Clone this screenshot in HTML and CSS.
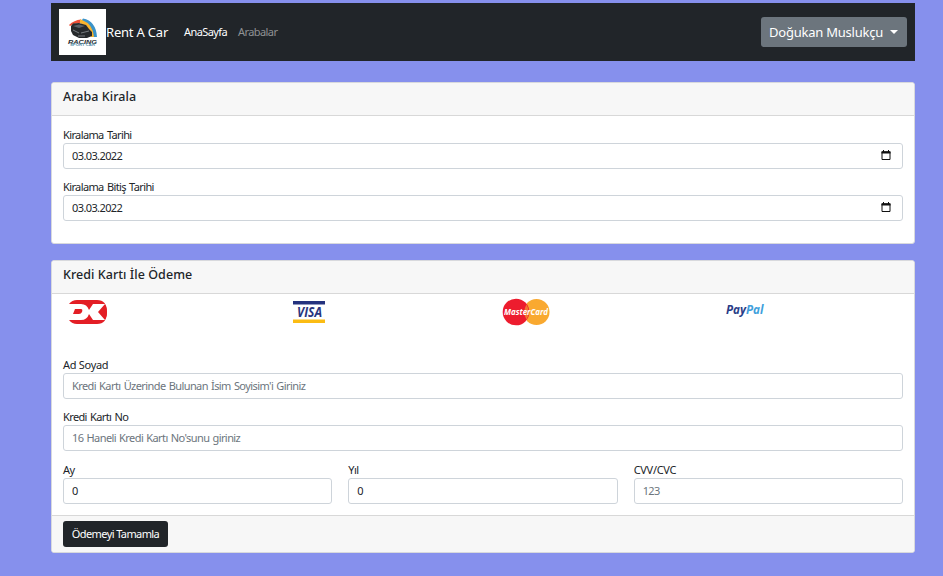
FILE: index.html
```html
<!DOCTYPE html>
<html lang="tr">
<head>
<meta charset="utf-8">
<title>Rent A Car</title>
<link rel="stylesheet" href="styles.css">
</head>
<body>
<div class="container">
  <nav class="navbar">
    <svg class="logo" viewBox="0 0 47 46">
      <rect width="47" height="46" fill="#fff"/>
      <path d="M10 16Q15 11 22 10.500L23 14Q16 13.500 11 17Z" fill="#ee5038"/>
      <path d="M21 10.500Q30 11 34 19L36 28H32Q30 18 21 14Z" fill="#fbb42d"/>
      <path d="M24 9.500Q37 12 38 28H35Q34 15 23 11Z" fill="#3b93c9"/>
      <path d="M12 17L14 14.500L20 14L27 16L30 20L33 23V27L28 29H20L14 26L12 22Z" fill="#26292c"/>
      <path d="M14 17L20 15.500L26 17L20 19Z" fill="#596066"/>
      <path d="M14 21L20 24M22 24L30 22M19 27L26 27" stroke="#8b9195" stroke-width=".8" fill="none"/>
      <text x="9" y="34.500" class="logo-title" textLength="29" lengthAdjust="spacingAndGlyphs">RACING</text>
      <text x="11" y="37.200" class="logo-sub" textLength="25" lengthAdjust="spacingAndGlyphs">SPORT CAR</text>
    </svg>
    <span class="brand">Rent A Car</span>
    <a class="link active">AnaSayfa</a>
    <a class="link">Arabalar</a>
    <button class="user"><span>Doğukan Muslukçu</span><i class="caret"></i></button>
  </nav>

  <section class="card rental">
    <h5 class="card-header">Araba Kirala</h5>
    <div class="card-body">
      <label class="field"><span class="label">Kiralama Tarihi</span>
        <span class="control"><span class="date">03.03.2022</span>
          <svg class="calendar" viewBox="0 0 10 11"><path d="M1 2H9V9.500H1Z" fill="none" stroke="#111"/><path d="M.5 1.200H9.500V3.500H.5ZM2 0H3V2H2ZM7 0H8V2H7Z" fill="#111"/></svg></span></label>
      <label class="field"><span class="label">Kiralama Bitiş Tarihi</span>
        <span class="control"><span class="date">03.03.2022</span>
          <svg class="calendar" viewBox="0 0 10 11"><path d="M1 2H9V9.500H1Z" fill="none" stroke="#111"/><path d="M.5 1.200H9.500V3.500H.5ZM2 0H3V2H2ZM7 0H8V2H7Z" fill="#111"/></svg></span></label>
    </div>
  </section>

  <section class="card payment">
    <h5 class="card-header">Kredi Kartı İle Ödeme</h5>
    <div class="brands">
      <svg class="dk" viewBox="0 0 40 26"><path d="M9 1H29Q39 1 39 13T29 25H9Q4 25 1 21H13Q19 21 21 15L25 21H37L30 13L37 5H25L21 11Q19 5 13 5H1Q4 1 9 1Z" fill="#e31e25"/><path d="M7 10H13Q15 10 14 13Q13 15 11 15H5Z" fill="#e31e25"/><path d="M37 6L31 13L37 20Q39 17 39 13T37 6Z" fill="#e31e25"/></svg>
      <svg class="visa" viewBox="0 0 34 24"><path d="M1 0H33V3.500H1Z" fill="#24327e"/><path d="M1 18.500H33V22H1Z" fill="#fbbc14"/><text x="5" y="15.800" class="visa-text" textLength="25" lengthAdjust="spacingAndGlyphs">VISA</text></svg>
      <svg class="master" viewBox="0 0 48 28"><circle cx="34.500" cy="14" r="13" fill="#f9a930"/><circle cx="14" cy="14" r="13.300" fill="#ed1c2e"/><path d="M24.500 6.500Q29 14 24.500 21.500Q20 14 24.500 6.500Z" fill="#f4752f"/><text x="2" y="17" class="master-text" textLength="44" lengthAdjust="spacingAndGlyphs">MasterCard</text></svg>
      <svg class="paypal" viewBox="0 0 40 16"><text x="1" y="11.500" class="paypal-text" fill="#293d87" textLength="20" lengthAdjust="spacingAndGlyphs">Pay</text><text x="21" y="11.500" class="paypal-text" fill="#409fdc" textLength="17.500" lengthAdjust="spacingAndGlyphs">Pal</text></svg>
    </div>
    <div class="card-body">
      <label class="field"><span class="label wide">Ad Soyad</span><span class="control hint">Kredi Kartı Üzerinde Bulunan İsim Soyisim'i Giriniz</span></label>
      <label class="field"><span class="label">Kredi Kartı No</span><span class="control hint">16 Haneli Kredi Kartı No'sunu giriniz</span></label>
      <div class="row">
        <label class="field"><span class="label">Ay</span><span class="control">0</span></label>
        <label class="field"><span class="label">Yıl</span><span class="control">0</span></label>
        <label class="field"><span class="label wide">CVV/CVC</span><span class="control hint">123</span></label>
      </div>
    </div>
    <div class="card-footer"><button class="submit">Ödemeyi Tamamla</button></div>
  </section>
</div>
</body>
</html>
```
FILE: styles.css
```css
* { box-sizing: border-box; }
body { margin: 0; background: #8690ed; color: #212529; font: 11px/16px "Noto Sans", sans-serif; letter-spacing: -.58px; word-spacing: .8px; }
.container { width: 864px; margin-left: 51px; padding-top: 3px; }
.navbar { height: 58px; display: flex; align-items: center; padding: 0 8px; background: #212529; color: #fff; }
.logo { width: 47px; height: 46px; word-spacing: 0; }
.logo-title { font: italic bold 6px "Liberation Sans", sans-serif; fill: #25282b; letter-spacing: 0; }
.logo-sub { font: bold 2.8px "Liberation Sans", sans-serif; fill: #538aa5; letter-spacing: 0; }
.brand { width: 78px; font-size: 13px; letter-spacing: -.2px; word-spacing: 0; white-space: nowrap; }
.link { width: 54px; color: #909294; }
.link.active { color: #fff; }
.user { margin-left: auto; width: 146px; height: 30px; display: flex; align-items: center; justify-content: space-between; padding: 0 9px 0 8px; border: 0; border-radius: 3px; background: #6c757d; color: #fff; font: 13px/20px "Noto Sans", sans-serif; letter-spacing: -.23px; white-space: nowrap; }
.caret { border: 4px solid transparent; border-top-color: #fff; border-bottom: 0; }
.card { background: #fff; border: 1px solid #d8d9dd; border-radius: 3px; overflow: hidden; }
.rental { height: 162px; margin-top: 21px; }
.payment { height: 293px; margin-top: 16px; display: flex; flex-direction: column; }
.card-header { height: 33px; flex: none; margin: 0; padding: 6px 11px; background: #f7f7f7; border-bottom: 1px solid #d8d8d8; font-size: 12.5px; line-height: 16px; font-weight: 500; letter-spacing: .05px; word-spacing: 0; }
.card-body { padding: 11px 11px 0; }
.field { display: block; margin-bottom: 10px; }
.label { display: block; height: 16px; white-space: nowrap; letter-spacing: -.62px; word-spacing: 1px; }
.label.wide { letter-spacing: -.3px; word-spacing: 0; }
.control { height: 26px; display: flex; align-items: center; justify-content: space-between; padding: 0 11px 0 8px; border: 1px solid #ced4da; border-radius: 3px; background: #fff; white-space: nowrap; }
.date { letter-spacing: -.6px; }
.hint { color: #6c757d; }
.calendar { width: 10px; height: 11px; margin-top: -2px; }
.brands { display: grid; grid-template-columns: 224px 210px 223px 1fr; padding: 5px 0 0 16px; height: 52px; align-items: start; flex: none; }
.dk { width: 40px; height: 26px; }
.visa { width: 34px; height: 24px; margin-top: 2px; }
.master { width: 48px; height: 28px; margin-top: -1px; }
.paypal { width: 40px; height: 16px; margin-top: 3px; }
.visa-text { font: italic bold 14px "Open Sans", sans-serif; fill: #29357e; letter-spacing: 0; }
.master-text { font: italic bold 8px "Open Sans", sans-serif; fill: #fff; letter-spacing: 0; }
.paypal-text { font: italic bold 12px "Open Sans", sans-serif; letter-spacing: 0; }
.row { display: grid; grid-template-columns: repeat(3, 1fr); gap: 16px; padding-top: 1px; }
.card-footer { flex: none; margin-top: auto; height: 37px; padding: 5px 11px; background: #f7f7f7; border-top: 1px solid #d8d8d8; }
.submit { width: 105px; height: 26px; padding: 0; border: 0; border-radius: 3px; background: #212529; color: #fff; font: 11px/16px "Noto Sans", sans-serif; letter-spacing: -.6px; white-space: nowrap; }
```
